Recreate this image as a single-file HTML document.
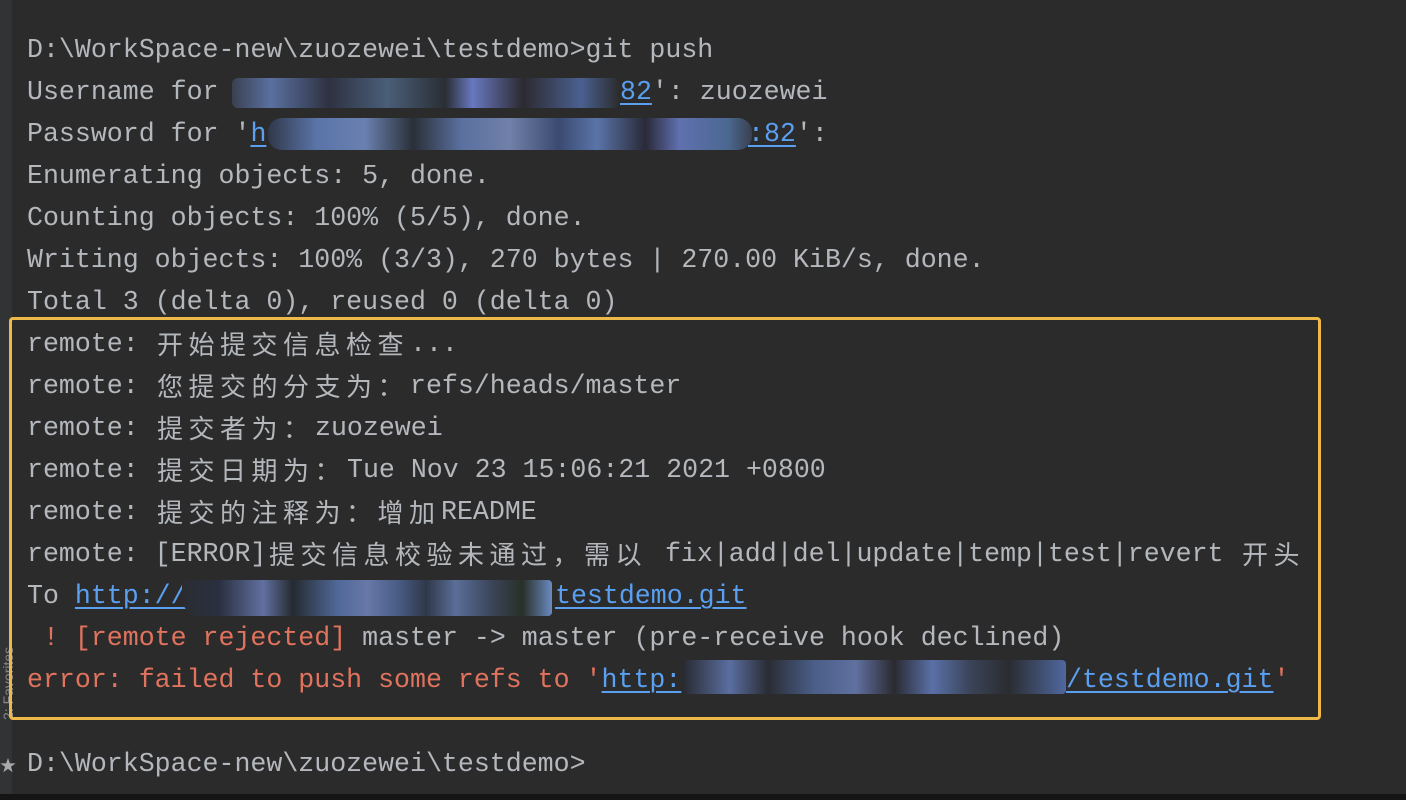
<!DOCTYPE html>
<html><head><meta charset="utf-8"><style>
html,body{margin:0;padding:0}
body{width:1406px;height:800px;background:#2b2b2b;position:relative;overflow:hidden;font-family:"Liberation Mono","Noto Sans CJK SC",monospace;font-size:26.6px;color:#b4b8bc}
.l{position:absolute;height:42px;line-height:42px;white-space:pre}
.c{font-family:"Noto Sans CJK SC","WenQuanYi Zen Hei",sans-serif;letter-spacing:5.5px;font-size:26px}
.a{color:#5a9ff0;text-decoration:underline;text-decoration-thickness:2px;text-underline-offset:4px}
.r{color:#e0735e}
.b{position:absolute;height:30px;border-radius:6px}
</style></head><body>
<div style="position:absolute;left:0;top:0;width:12px;height:794px;background:#313335"></div>
<div style="position:absolute;left:0;top:794px;width:1406px;height:6px;background:#151515"></div>
<div style="position:absolute;left:0;top:620px;width:12px;height:100px;color:#888;font-size:14px;writing-mode:vertical-rl;transform:rotate(180deg);font-family:'Liberation Sans',sans-serif">2: Favorites</div>
<div style="position:absolute;left:0;top:752px;color:#aaa;font-size:16px">★</div>

<div class="l" style="left:27px;top:29px">D:\WorkSpace-new\zuozewei\testdemo&gt;git push</div>
<div class="l" style="left:27px;top:71px">Username for </div>
<div class="b" style="left:232px;top:78px;width:388px;background:linear-gradient(90deg,#3a4050,#5a70a0 10%,#2e3242 25%,#4a5e78 40%,#2a2e34 55%,#6878c0 62%,#2c2a30 75%,#4a6090 90%,#2b2b2b)"></div>
<div class="l" style="left:620px;top:71px"><span class="a">82</span>': zuozewei</div>
<div class="l" style="left:27px;top:113px">Password for '<span class="a">h</span></div>
<div class="b" style="left:268px;top:118px;width:484px;height:32px;border-radius:14px;background:linear-gradient(90deg,#30384a,#5a74a8 10%,#6a80b0 20%,#2a3038 30%,#5a70a0 40%,#7080a8 50%,#3a4a70 60%,#5a74a8 68%,#2a2a38 78%,#6070b0 85%,#4a6890 95%,#3a4050)"></div>
<div class="l" style="left:748px;top:113px"><span class="a">:82</span>':</div>
<div class="l" style="left:27px;top:155px">Enumerating objects: 5, done.</div>
<div class="l" style="left:27px;top:197px">Counting objects: 100% (5/5), done.</div>
<div class="l" style="left:27px;top:239px">Writing objects: 100% (3/3), 270 bytes | 270.00 KiB/s, done.</div>
<div class="l" style="left:27px;top:281px">Total 3 (delta 0), reused 0 (delta 0)</div>

<div style="position:absolute;left:9px;top:317px;width:1306px;height:397px;border:3px solid #efb949;border-radius:4px"></div>

<div class="l" style="left:27px;top:323px">remote: </div><div class="l c" style="left:157px;top:323px">开始提交信息检查</div><div class="l" style="left:410px;top:323px">...</div>
<div class="l" style="left:27px;top:365px">remote: </div><div class="l c" style="left:157px;top:365px">您提交的分支为：</div><div class="l" style="left:410px;top:365px">refs/heads/master</div>
<div class="l" style="left:27px;top:407px">remote: </div><div class="l c" style="left:157px;top:407px">提交者为：</div><div class="l" style="left:315px;top:407px">zuozewei</div>
<div class="l" style="left:27px;top:449px">remote: </div><div class="l c" style="left:157px;top:449px">提交日期为：</div><div class="l" style="left:347px;top:449px">Tue Nov 23 15:06:21 2021 +0800</div>
<div class="l" style="left:27px;top:491px">remote: </div><div class="l c" style="left:157px;top:491px">提交的注释为：增加</div><div class="l" style="left:441px;top:491px">README</div>
<div class="l" style="left:27px;top:533px">remote: [ERROR]</div><div class="l c" style="left:269px;top:533px">提交信息校验未通过，需以</div><div class="l" style="left:649px;top:533px"> fix|add|del|update|temp|test|revert</div><div class="l c" style="left:1242px;top:533px">开头</div>
<div class="l" style="left:27px;top:575px">To <span class="a">http://</span></div>
<div class="b" style="left:182px;top:580px;width:370px;height:36px;border-radius:4px 4px 4px 18px;background:linear-gradient(90deg,#2a2c30,#2a3040 10%,#6070a0 22%,#252a30 30%,#506898 42%,#6878a8 50%,#4a5e88 58%,#30384a 66%,#5a6e98 74%,#3a4458 84%,#283028 92%,#6a8ac0)"></div>
<div class="l" style="left:555px;top:575px"><span class="a">testdemo.git</span></div>
<div class="l" style="left:27px;top:617px"><span class="r"> ! [remote rejected]</span> master -&gt; master (pre-receive hook declined)</div>
<div class="l" style="left:27px;top:659px"><span class="r">error: failed to push some refs to '</span><span class="a">http:</span></div>
<div class="b" style="left:684px;top:660px;width:382px;height:34px;border-radius:4px;background:linear-gradient(90deg,#2a2c34,#5a6ea0 12%,#2a2c34 22%,#4a5e88 34%,#6070a0 45%,#2a2a30 55%,#5a70a8 65%,#3a4458 75%,#2a2c30 85%,#5068a0)"></div>
<div class="l" style="left:1066px;top:659px"><span class="a">/testdemo.git</span><span class="r">'</span></div>

<div class="l" style="left:27px;top:743px">D:\WorkSpace-new\zuozewei\testdemo&gt;</div>
</body></html>
